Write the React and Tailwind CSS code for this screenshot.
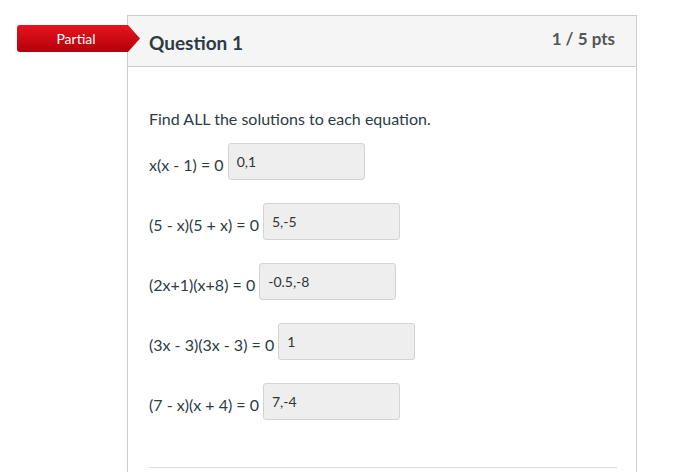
import React from "react";

const rows = [
  { label: "x(x - 1) = 0", value: "0,1" },
  { label: "(5 - x)(5 + x) = 0", value: "5,-5" },
  { label: "(2x+1)(x+8) = 0", value: "-0.5,-8" },
  { label: "(3x - 3)(3x - 3) = 0", value: "1" },
  { label: "(7 - x)(x + 4) = 0", value: "7,-4" },
];

export default function App() {
  return (
    <div
      className="relative w-[675px] h-[472px] overflow-hidden bg-white text-[#2d3b45]"
      style={{ fontFamily: "Lato, 'Open Sans', sans-serif" }}
    >
      <div className="absolute left-[17px] top-[25px] h-[27px] w-[124px] z-10">
        <svg width="124" height="27" viewBox="0 0 124 27" className="absolute inset-0">
          <defs>
            <linearGradient id="pg" x1="0" y1="0" x2="0" y2="1">
              <stop offset="0" stopColor="#e8141f" />
              <stop offset="1" stopColor="#b3000a" />
            </linearGradient>
          </defs>
          <path d="M3 0 H111 L123 13.5 L111 27 H3 Q0 27 0 24 V3 Q0 0 3 0 Z" fill="url(#pg)" />
        </svg>
        <div className="relative w-[118px] h-[27px] flex items-center justify-center text-white text-[14px]">
          Partial
        </div>
      </div>

      <div className="ml-[127px] mt-[15px] w-[510px] h-[457px] border-l border-r border-t border-[#c7cdd1] flex flex-col">
        <div className="h-[51px] bg-[#f5f5f5] border-b border-[#c7cdd1] flex items-center justify-between pl-[21px] pr-[21px]">
          <div className="text-[19px] leading-[24px] font-bold text-[#2d3b45] mt-[4px]">Question 1</div>
          <div className="text-[17px] leading-[22px] font-bold text-[#555555] -mt-[5px]">1 / 5 pts</div>
        </div>
        <div className="pl-[21px] pr-[21px] pt-[42px] flex-1 flex flex-col">
          <div className="text-[16px] leading-[20px]">Find ALL the solutions to each equation.</div>
          <div className="mt-[14px] flex flex-col gap-[23px]">
            {rows.map((r) => (
              <div key={r.label} className="flex items-center">
                <span className="text-[16px] leading-[20px] pt-[7px] mr-[4px]">{r.label}</span>
                <div className="w-[137px] h-[37px] bg-[#eeeeee] border border-[#d3d3d3] rounded-[3px] pl-[8px] pt-[9px] text-[14px] leading-[18px] text-[#333333]">
                  {r.value}
                </div>
              </div>
            ))}
          </div>
          <div className="mt-auto mb-[4px] border-t border-[#d9dde0] w-[468px]" />
        </div>
      </div>
    </div>
  );
}
